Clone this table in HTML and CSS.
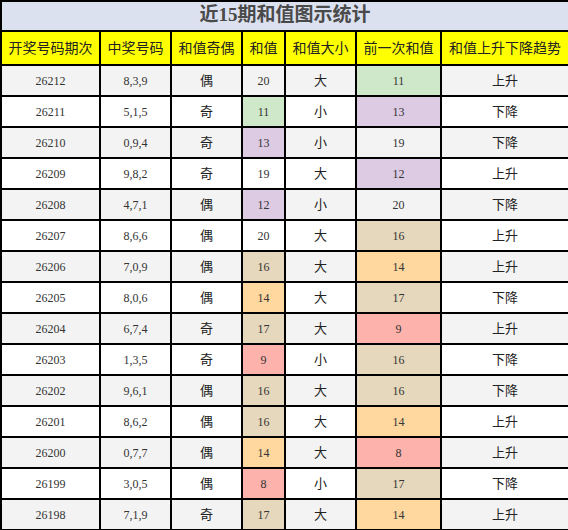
FILE: index.html
```html
<!DOCTYPE html>
<html lang="zh">
<head>
<meta charset="utf-8">
<link rel="stylesheet" href="styles.css">
</head>
<body>
<table class="stat">
  <colgroup>
    <col class="c1"><col class="c2"><col class="c3"><col class="c4"><col class="c5"><col class="c6"><col class="c7">
  </colgroup>
  <thead>
    <tr class="title"><th colspan="7">近15期和值图示统计</th></tr>
    <tr class="head">
      <th>开奖号码期次</th><th>中奖号码</th><th>和值奇偶</th><th>和值</th><th>和值大小</th><th>前一次和值</th><th>和值上升下降趋势</th>
    </tr>
  </thead>
  <tbody>
    <tr class="alt"><td class="num">26212</td><td class="num">8,3,9</td><td>偶</td><td class="num">20</td><td>大</td><td class="num green">11</td><td>上升</td></tr>
    <tr><td class="num">26211</td><td class="num">5,1,5</td><td>奇</td><td class="num green">11</td><td>小</td><td class="num purple">13</td><td>下降</td></tr>
    <tr class="alt"><td class="num">26210</td><td class="num">0,9,4</td><td>奇</td><td class="num purple">13</td><td>小</td><td class="num">19</td><td>下降</td></tr>
    <tr><td class="num">26209</td><td class="num">9,8,2</td><td>奇</td><td class="num">19</td><td>大</td><td class="num purple">12</td><td>上升</td></tr>
    <tr class="alt"><td class="num">26208</td><td class="num">4,7,1</td><td>偶</td><td class="num purple">12</td><td>小</td><td class="num">20</td><td>下降</td></tr>
    <tr><td class="num">26207</td><td class="num">8,6,6</td><td>偶</td><td class="num">20</td><td>大</td><td class="num beige">16</td><td>上升</td></tr>
    <tr class="alt"><td class="num">26206</td><td class="num">7,0,9</td><td>偶</td><td class="num beige">16</td><td>大</td><td class="num orange">14</td><td>上升</td></tr>
    <tr><td class="num">26205</td><td class="num">8,0,6</td><td>偶</td><td class="num orange">14</td><td>大</td><td class="num beige">17</td><td>下降</td></tr>
    <tr class="alt"><td class="num">26204</td><td class="num">6,7,4</td><td>奇</td><td class="num beige">17</td><td>大</td><td class="num pink">9</td><td>上升</td></tr>
    <tr><td class="num">26203</td><td class="num">1,3,5</td><td>奇</td><td class="num pink">9</td><td>小</td><td class="num beige">16</td><td>下降</td></tr>
    <tr class="alt"><td class="num">26202</td><td class="num">9,6,1</td><td>偶</td><td class="num beige">16</td><td>大</td><td class="num beige">16</td><td>下降</td></tr>
    <tr><td class="num">26201</td><td class="num">8,6,2</td><td>偶</td><td class="num beige">16</td><td>大</td><td class="num orange">14</td><td>上升</td></tr>
    <tr class="alt"><td class="num">26200</td><td class="num">0,7,7</td><td>偶</td><td class="num orange">14</td><td>大</td><td class="num pink">8</td><td>上升</td></tr>
    <tr><td class="num">26199</td><td class="num">3,0,5</td><td>偶</td><td class="num pink">8</td><td>小</td><td class="num beige">17</td><td>下降</td></tr>
    <tr class="alt"><td class="num">26198</td><td class="num">7,1,9</td><td>奇</td><td class="num beige">17</td><td>大</td><td class="num orange">14</td><td>上升</td></tr>
  </tbody>
</table>
</body>
</html>
```
FILE: styles.css
```css
html, body {
  margin: 0;
  padding: 0;
  background: #ffffff;
}

.stat {
  width: 568px;
  border-collapse: collapse;
  table-layout: fixed;
  font-family: "Noto Sans CJK SC", "Noto Sans", sans-serif;
  color: #222;
}

.c1 { width: 99px; }
.c2 { width: 71px; }
.c3 { width: 71px; }
.c4 { width: 43px; }
.c5 { width: 71px; }
.c6 { width: 85px; }
.c7 { width: 128px; }

.stat th, .stat td {
  border: 2px solid #000;
  padding: 0 0 2px 0;
  text-align: center;
  vertical-align: middle;
  line-height: 18px;
}

.title { height: 30px; }
.head { height: 34px; }
.stat tbody tr { height: 31px; }

.title th {
  background: #dce1f0;
  color: #4a4a4a;
  font-size: 19px;
  font-weight: bold;
  font-family: "Liberation Serif", "Noto Sans CJK SC", serif;
  line-height: 24px;
}

.head th {
  background: #ffff00;
  font-size: 14px;
  font-weight: normal;
  color: #222;
}

.stat td {
  font-size: 13px;
  background: #ffffff;
}

.alt td { background: #f3f3f3; }

.stat td.num {
  font-family: "Liberation Serif", "Times New Roman", serif;
  font-size: 12px;
  color: #333;
  padding: 0;
}

.stat td.green { background: #cfe8c9; }
.stat td.purple { background: #ddcbe4; }
.stat td.beige { background: #e6d8bd; }
.stat td.orange { background: #ffd8a0; }
.stat td.pink { background: #fdb2ab; }
```
